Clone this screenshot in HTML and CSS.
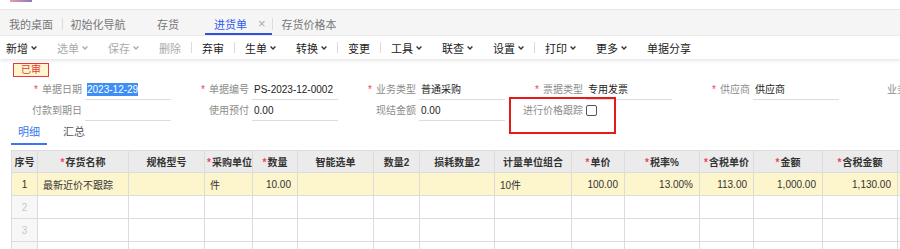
FILE: index.html
```html
<!DOCTYPE html>
<html lang="zh-CN">
<head>
  <meta charset="UTF-8">
  <title>进货单</title>
  <link rel="stylesheet" href="styles.css">
</head>
<body>
<div class="page">

  <div class="topstrip"><div class="logo"></div></div>

  <!-- open tabs -->
  <div class="tabbar">
    <div class="tab">我的桌面</div>
    <div class="tab-sep"></div>
    <div class="tab fixed">初始化导航</div>
    <div class="tab fixed">存货</div>
    <div class="tab active">进货单<span class="close">×</span></div>
    <div class="tab-sep"></div>
    <div class="tab">存货价格本</div>
  </div>

  <!-- toolbar -->
  <div class="toolbar">
    <div class="tb-item">新增<svg class="chev" viewBox="0 0 6 4"><path d="M0.6 0.6 L3 3 L5.4 0.6"/></svg></div>
    <div class="tb-item off">选单<svg class="chev" viewBox="0 0 6 4"><path d="M0.6 0.6 L3 3 L5.4 0.6"/></svg></div>
    <div class="tb-item off">保存<svg class="chev" viewBox="0 0 6 4"><path d="M0.6 0.6 L3 3 L5.4 0.6"/></svg></div>
    <div class="tb-item off">删除</div>
    <div class="tb-sep"></div>
    <div class="tb-item">弃审</div>
    <div class="tb-sep"></div>
    <div class="tb-item">生单<svg class="chev" viewBox="0 0 6 4"><path d="M0.6 0.6 L3 3 L5.4 0.6"/></svg></div>
    <div class="tb-item">转换<svg class="chev" viewBox="0 0 6 4"><path d="M0.6 0.6 L3 3 L5.4 0.6"/></svg></div>
    <div class="tb-sep"></div>
    <div class="tb-item">变更</div>
    <div class="tb-sep"></div>
    <div class="tb-item">工具<svg class="chev" viewBox="0 0 6 4"><path d="M0.6 0.6 L3 3 L5.4 0.6"/></svg></div>
    <div class="tb-item">联查<svg class="chev" viewBox="0 0 6 4"><path d="M0.6 0.6 L3 3 L5.4 0.6"/></svg></div>
    <div class="tb-item">设置<svg class="chev" viewBox="0 0 6 4"><path d="M0.6 0.6 L3 3 L5.4 0.6"/></svg></div>
    <div class="tb-sep"></div>
    <div class="tb-item">打印<svg class="chev" viewBox="0 0 6 4"><path d="M0.6 0.6 L3 3 L5.4 0.6"/></svg></div>
    <div class="tb-item">更多<svg class="chev" viewBox="0 0 6 4"><path d="M0.6 0.6 L3 3 L5.4 0.6"/></svg></div>
    <div class="tb-item">单据分享</div>
  </div>

  <div class="stamp">已审</div>

  <!-- header fields -->
  <div class="form">
    <div class="form-row">
      <div class="field"><label><span class="req">*</span>单据日期</label><div class="value"><span class="selected">2023-12-29</span></div></div>
      <div class="field"><label><span class="req">*</span>单据编号</label><div class="value">PS-2023-12-0002</div></div>
      <div class="field"><label><span class="req">*</span>业务类型</label><div class="value">普通采购</div></div>
      <div class="field"><label><span class="req">*</span>票据类型</label><div class="value">专用发票</div></div>
      <div class="field"><label><span class="req">*</span>供应商</label><div class="value">供应商</div></div>
      <div class="field"><label>业务员</label><div class="value"></div></div>
    </div>
    <div class="form-row">
      <div class="field"><label>付款到期日</label><div class="value"></div></div>
      <div class="field"><label>使用预付</label><div class="value">0.00</div></div>
      <div class="field"><label>现结金额</label><div class="value">0.00</div></div>
      <div class="field"><label>进行价格跟踪</label><div class="value plain"><span class="checkbox"></span></div></div>
    </div>
    <div class="mark"></div>
  </div>

  <div class="subtabs">
    <div class="subtab active">明细</div>
    <div class="subtab">汇总</div>
  </div>

  <table class="grid">
    <colgroup>
      <col class="c26"><col class="c91"><col class="c76"><col class="c48"><col class="c45">
      <col class="c76"><col class="c46"><col class="c75"><col class="c77"><col class="c53">
      <col class="c75"><col class="c54"><col class="c69"><col class="c75"><col class="c80">
    </colgroup>
    <thead>
      <tr>
        <th>序号</th>
        <th><span class="req">*</span>存货名称</th>
        <th>规格型号</th>
        <th><span class="req">*</span>采购单位</th>
        <th><span class="req">*</span>数量</th>
        <th>智能选单</th>
        <th>数量2</th>
        <th>损耗数量2</th>
        <th>计量单位组合</th>
        <th><span class="req">*</span>单价</th>
        <th><span class="req">*</span>税率%</th>
        <th><span class="req">*</span>含税单价</th>
        <th><span class="req">*</span>金额</th>
        <th><span class="req">*</span>含税金额</th>
        <th><span class="req">*</span>税额</th>
      </tr>
    </thead>
    <tbody>
      <tr class="current">
        <td class="no">1</td>
        <td>最新近价不跟踪</td>
        <td></td>
        <td>件</td>
        <td class="num">10.00</td>
        <td></td>
        <td></td>
        <td></td>
        <td>10件</td>
        <td class="num">100.00</td>
        <td class="num">13.00%</td>
        <td class="num">113.00</td>
        <td class="num">1,000.00</td>
        <td class="num">1,130.00</td>
        <td class="num">130.00</td>
      </tr>
      <tr>
        <td class="no empty">2</td><td></td><td></td><td></td><td></td><td></td><td></td><td></td><td></td><td></td><td></td><td></td><td></td><td></td><td></td>
      </tr>
      <tr>
        <td class="no empty">3</td><td></td><td></td><td></td><td></td><td></td><td></td><td></td><td></td><td></td><td></td><td></td><td></td><td></td><td></td>
      </tr>
      <tr>
        <td class="no empty">4</td><td></td><td></td><td></td><td></td><td></td><td></td><td></td><td></td><td></td><td></td><td></td><td></td><td></td><td></td>
      </tr>
    </tbody>
  </table>

</div>
</body>
</html>
```

FILE: styles.css
```css
body {
  margin: 0;
  font-family: "Liberation Sans", "Noto Sans CJK SC", sans-serif;
  background: #fff;
  color: #333;
}
.page {
  width: 900px;
  height: 249px;
  overflow: hidden;
}

/* top strip */
.topstrip {
  height: 9px;
}
.logo {
  margin-left: 10px;
  width: 22px;
  height: 2px;
  background: linear-gradient(to right, #e79aa6, #8a78c0);
}

/* tabs */
.tabbar {
  display: flex;
  align-items: stretch;
  height: 25px;
  background: #f5f5f5;
  border-top: 1px solid #e6e6e6;
  font-size: 11px;
  color: #777;
}
.tab {
  display: flex;
  align-items: center;
  padding: 2px 9px 0;
  white-space: nowrap;
}
.tab.fixed {
  width: 70px;
  padding: 2px 0 0;
  justify-content: center;
}
.tab.active {
  margin-left: 2px;
  padding: 4px 6px 0 9px;
  color: #2f5bea;
  border-bottom: 2px solid #2f4fe0;
}
.tab .close {
  margin-left: 11px;
  color: #aaa;
  font-size: 13px;
}
.tab-sep {
  width: 1px;
  height: 12px;
  margin-top: 8px;
  background: #ddd;
}

/* toolbar */
.toolbar {
  display: flex;
  align-items: center;
  height: 23px;
  font-size: 11px;
  color: #222;
  box-shadow: 0 2px 3px rgba(0, 0, 0, 0.09);
  border-top: 1px solid #ececec;
}
.tb-item {
  display: flex;
  align-items: center;
  padding: 0 10px;
  white-space: nowrap;
}
.tb-item:first-child {
  padding-left: 6px;
}
.tb-item.off {
  color: #aaa;
}
.chev {
  width: 6px;
  height: 4px;
  margin-left: 3px;
  fill: none;
  stroke: #333;
  stroke-width: 1.4;
}
.tb-item.off .chev {
  stroke: #aaa;
}
.tb-sep {
  width: 1px;
  height: 11px;
  background: #e0d6dc;
}

/* status stamp */
.stamp {
  width: 34px;
  height: 12px;
  margin: 4px 0 0 13px;
  border: 1px solid #e53b3b;
  background: #fff6cf;
  color: #e23a3a;
  font-size: 10px;
  line-height: 12px;
  text-align: center;
}

/* header form */
.form {
  position: relative;
  margin-top: 2px;
  padding-left: 4px;
}
.form-row {
  display: flex;
  height: 21px;
}
.field {
  display: flex;
  flex: 0 0 167px;
  align-items: stretch;
  font-size: 10px;
}
.field label {
  width: 78px;
  margin-right: 3px;
  text-align: right;
  color: #8c8c8c;
  line-height: 21px;
  white-space: nowrap;
}
.req {
  color: #f0415b;
  margin-right: 4px;
}
.value {
  width: 84px;
  padding-left: 2px;
  border-bottom: 1px solid #dcdcdc;
  color: #222;
  line-height: 21px;
  white-space: nowrap;
}
.value.plain {
  border-bottom: 0;
  padding-left: 0;
  display: flex;
  align-items: center;
}
.selected {
  background: #3d8ef5;
  color: #fff;
  padding: 1px 0;
}
.checkbox {
  width: 9px;
  height: 9px;
  border: 1px solid #555;
  border-radius: 2px;
}
.mark {
  position: absolute;
  left: 509px;
  top: 18px;
  width: 103px;
  height: 33px;
  border: 2px solid #e41b1b;
}

/* detail tabs */
.subtabs {
  display: flex;
  margin: 1px 0 0 11px;
  height: 23px;
  font-size: 11px;
}
.subtab {
  padding: 0 7px;
  line-height: 20px;
  color: #555;
  margin-right: 9px;
}
.subtab.active {
  color: #3b78ee;
  border-bottom: 2px solid #3b78ee;
}

/* grid */
.grid {
  margin: 5px 0 0 11px;
  border-collapse: collapse;
  table-layout: fixed;
  width: 966px;
  font-size: 10px;
}
.c26 { width: 26px; }
.c45 { width: 45px; }
.c46 { width: 46px; }
.c48 { width: 48px; }
.c53 { width: 53px; }
.c54 { width: 54px; }
.c69 { width: 69px; }
.c75 { width: 75px; }
.c76 { width: 76px; }
.c77 { width: 77px; }
.c80 { width: 80px; }
.c91 { width: 91px; }
.grid th,
.grid td {
  border: 1px solid #dcdcdc;
  white-space: nowrap;
  overflow: hidden;
}
.grid th {
  height: 21px;
  background: #ebebeb;
  color: #333;
  font-weight: bold;
  text-align: center;
  padding: 0 2px;
}
.grid th .req {
  margin-right: 1px;
}
.grid td {
  height: 22px;
  padding: 0 5px;
  color: #333;
}
.grid tr.current td {
  background: #fdf5cc;
}
.grid td.no {
  text-align: center;
  padding: 0;
  background: #f7f7f7;
}
.grid td.no.empty {
  color: #c8c8c8;
}
.grid td.num {
  text-align: right;
  padding-right: 6px;
}
```
